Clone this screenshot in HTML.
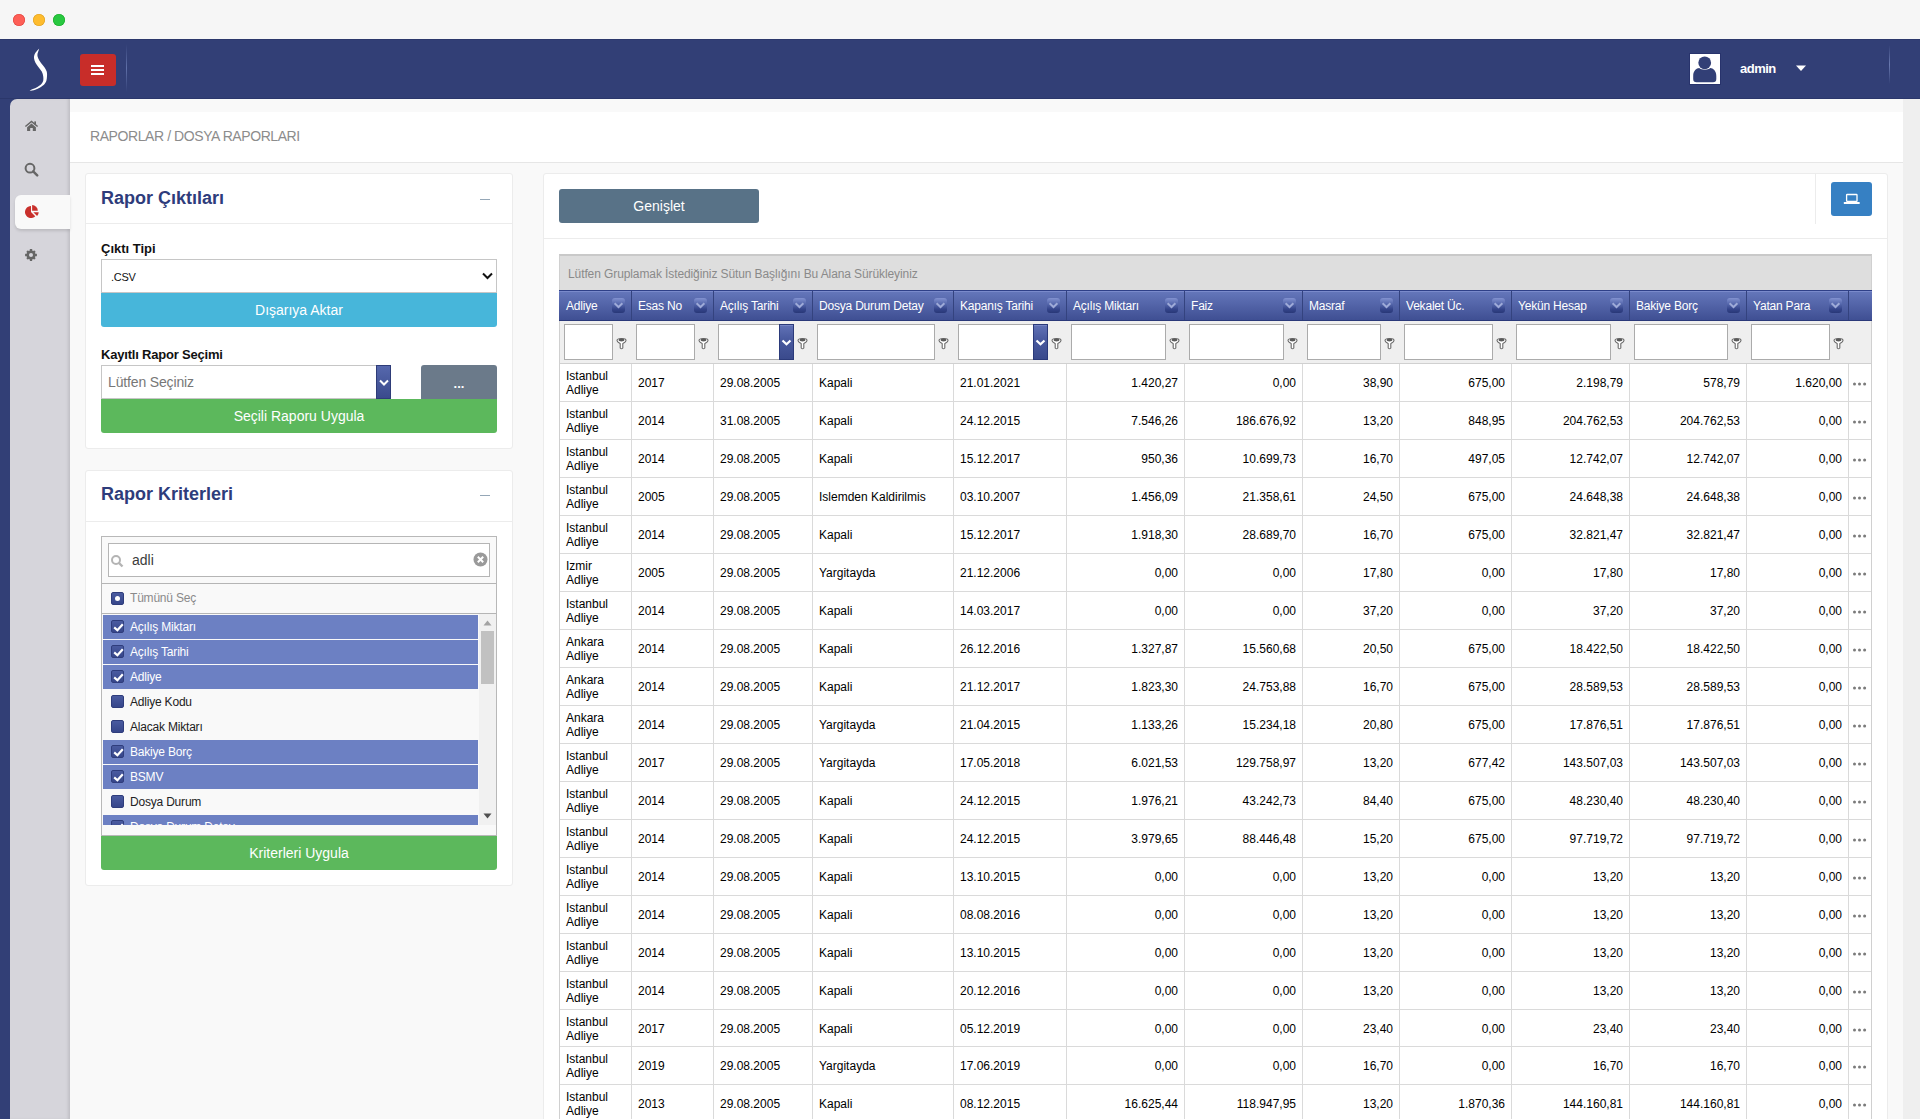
<!DOCTYPE html><html><head><meta charset="utf-8"><style>
*{box-sizing:border-box;margin:0;padding:0}
html,body{width:1920px;height:1119px;overflow:hidden}
body{position:relative;background:#f9f9f9;font-family:"Liberation Sans",sans-serif;color:#222}
.a{position:absolute}
#titlebar{left:0;top:0;width:1920px;height:39px;background:#f6f6f6}
.tl{position:absolute;top:14px;width:12px;height:12px;border-radius:50%}
#nav{left:0;top:39px;width:1920px;height:60px;background:#323f76;box-shadow:inset 0 1px #2b376b,inset 0 -1px #2b376b}
#side{left:10px;top:99px;width:60px;height:1020px;background:#d6d5db;border-top-left-radius:7px;box-shadow:inset -3px 0 3px -1px rgba(0,0,0,0.10)}
#rstrip{left:1903px;top:99px;width:17px;height:1020px;background:#efefef}
#topstrip{left:70px;top:99px;width:1833px;height:13px;background:#f9f9f9}
#bc{left:70px;top:112px;width:1833px;height:51px;background:#fff;border-bottom:1px solid #e6e6e6}
#bc span{position:absolute;left:20px;top:16px;font-size:14px;color:#8c8c8c;letter-spacing:-0.42px}
.panel{position:absolute;background:#fff;border:1px solid #ececec;border-radius:3px}
.ptitle{position:absolute;left:15px;font-size:18px;font-weight:bold;color:#2e3c7b}
.pmin{position:absolute;width:10px;height:1px;background:#95a7b7}
.phdr{position:absolute;left:0;width:100%;height:1px;background:#ececec}
.lbl{position:absolute;font-size:13px;font-weight:bold;color:#111}
.btn{position:absolute;color:#fff;text-align:center;font-size:14px}
</style></head><body>
<div class="a" id="titlebar"><div class="tl" style="left:13px;background:#fe5f57;box-shadow:inset 0 0 0 0.6px #e0443e"></div><div class="tl" style="left:33px;background:#febc2e;box-shadow:inset 0 0 0 0.6px #dea123"></div><div class="tl" style="left:53px;background:#28c840;box-shadow:inset 0 0 0 0.6px #1aab29"></div></div>
<div class="a" id="nav">
<svg class="a" style="left:0;top:0" width="140" height="60" viewBox="0 39 140 60"><path d="M38.75 49.00 C38.18 49.57 36.34 51.55 35.60 52.60 C34.86 53.65 34.56 54.33 34.30 55.30 C34.04 56.27 33.84 57.13 34.06 58.40 C34.28 59.67 34.82 61.40 35.60 62.90 C36.38 64.40 37.70 65.92 38.75 67.40 C39.80 68.88 41.16 70.32 41.90 71.80 C42.64 73.28 42.98 74.80 43.20 76.30 C43.42 77.80 43.50 79.53 43.20 80.80 C42.90 82.07 42.52 82.78 41.40 83.90 C40.28 85.02 38.20 86.53 36.50 87.50 C34.80 88.47 32.28 89.15 31.20 89.70 C30.12 90.25 29.33 90.80 30.00 90.80 C30.67 90.80 33.52 90.25 35.20 89.70 C36.88 89.15 38.53 88.47 40.10 87.50 C41.67 86.53 43.55 85.02 44.60 83.90 C45.65 82.78 46.00 82.07 46.40 80.80 C46.80 79.53 46.93 77.80 47.00 76.30 C47.07 74.80 47.20 73.28 46.80 71.80 C46.40 70.32 45.57 68.88 44.60 67.40 C43.63 65.92 42.05 64.40 41.00 62.90 C39.95 61.40 38.90 59.67 38.30 58.40 C37.70 57.13 37.47 56.27 37.40 55.30 C37.33 54.33 37.63 53.62 37.90 52.60 C38.17 51.58 38.86 49.80 39.00 49.20 C39.14 48.60 39.32 48.43 38.75 49.00Z" fill="#fff"/></svg>
<div class="a" style="left:80px;top:15px;width:36px;height:32px;background:#c82d29;border-radius:3px"></div>
<div class="a" style="left:91px;top:26px;width:13px;height:2px;background:#fff"></div>
<div class="a" style="left:91px;top:30px;width:13px;height:2px;background:#fff"></div>
<div class="a" style="left:91px;top:34px;width:13px;height:2px;background:#fff"></div>
<div class="a" style="left:126px;top:5px;width:1px;height:48px;background:linear-gradient(rgba(98,114,168,0),#6070a8 50%,rgba(98,114,168,0))"></div>
<div class="a" style="left:1690px;top:15px;width:30px;height:30px;background:#fff;box-shadow:0 0 0 1px #28336c"><svg width="30" height="30"><circle cx="14.7" cy="8.8" r="6.4" fill="#323f76"/><path d="M3.2 25 L3.2 22 C3.2 16.5 6.5 14.3 9.2 14 C11.5 16.3 18 16.3 20.3 14 C23 14.3 26.3 16.5 26.3 22 L26.3 25 Q26.3 28.3 23 28.3 L6.5 28.3 Q3.2 28.3 3.2 25Z" fill="#323f76"/></svg></div>
<div class="a" style="left:1740px;top:22px;font-size:13px;font-weight:bold;letter-spacing:-0.5px;color:#fff">admin</div>
<svg class="a" style="left:1795px;top:25.7px" width="12" height="7"><path d="M1 0.5 L11 0.5 L6 6 Z" fill="#fff"/></svg>
<div class="a" style="left:1889px;top:6px;width:1px;height:39px;background:linear-gradient(rgba(98,114,168,0),#6a7ab0 50%,rgba(98,114,168,0))"></div>
</div>
<div class="a" style="left:0;top:99px;width:10px;height:1020px;background:#323f76"></div><div class="a" style="left:0;top:99px;width:20px;height:20px;background:#323f76"></div>
<div class="a" id="side"></div>
<div class="a" id="rstrip"></div>
<div class="a" id="topstrip"></div>
<svg class="a" style="left:24px;top:119px" width="16" height="14" viewBox="24 119 16 14"><path d="M25.4 126.5 L31.5 121.4 L37.6 126.5" fill="none" stroke="#666" stroke-width="1.5"/><rect x="34.3" y="121.4" width="1.7" height="3" fill="#666"/><path d="M27.1 127.2 L31.5 123.5 L35.9 127.2 L35.9 130.9 L32.8 130.9 L32.8 128 L30.2 128 L30.2 130.9 L27.1 130.9 Z" fill="#666"/></svg>
<svg class="a" style="left:24px;top:162px" width="15" height="15" viewBox="0 0 15 15"><circle cx="6" cy="6.2" r="4.4" fill="none" stroke="#666" stroke-width="2"/><path d="M9.2 9.4 L13.2 13.4" stroke="#666" stroke-width="2.4" stroke-linecap="round"/></svg>
<div class="a" style="left:15px;top:195px;width:55px;height:34px;background:#f9f9f9;border-radius:6px 0 0 6px;box-shadow:0 2px 3px rgba(0,0,0,0.12)"></div>
<svg class="a" style="left:24px;top:203px" width="16" height="16" viewBox="24 203 16 16"><path d="M31 212 L31 206 A6 6 0 1 0 35.24 216.24 Z" fill="#c9302c"/><path d="M32.1 210.8 L32.1 205.1 A5.7 5.7 0 0 1 37.8 210.8 Z" fill="#c9302c"/><path d="M33.3 212.3 L38.7 212.3 A5.4 5.4 0 0 1 37.1 216.1 Z" fill="#c9302c"/></svg>
<svg class="a" style="left:24px;top:248px" width="14" height="14" viewBox="0 0 14 14"><g fill="#666"><circle cx="7" cy="7" r="4.5"/><rect x="5.8" y="1.1" width="2.4" height="11.8" rx="0.3"/><rect x="1.1" y="5.8" width="11.8" height="2.4" rx="0.3"/><rect x="5.8" y="1.4" width="2.4" height="11.2" rx="0.3" transform="rotate(45 7 7)"/><rect x="5.8" y="1.4" width="2.4" height="11.2" rx="0.3" transform="rotate(-45 7 7)"/></g><circle cx="7" cy="7" r="2" fill="#d6d5db"/></svg>
<div class="a" id="bc"><span>RAPORLAR / DOSYA RAPORLARI</span></div>
<div class="panel" style="left:85px;top:173px;width:428px;height:276px">
<div class="ptitle" style="top:14px">Rapor Çıktıları</div>
<div class="pmin" style="left:394px;top:25px"></div>
<div class="phdr" style="top:49px"></div>
</div>
<div class="lbl" style="left:101px;top:241px">Çıktı Tipi</div>
<div class="a" style="left:101px;top:259px;width:396px;height:34px;background:#fff;border:1px solid #c6c6c6"><span class="a" style="left:9px;top:11px;font-size:11px;letter-spacing:-0.3px;color:#111">.CSV</span><svg class="a" style="left:380px;top:12px" width="11" height="8"><path d="M1 1.5 L5.5 6 L10 1.5" fill="none" stroke="#111" stroke-width="2"/></svg></div>
<div class="btn" style="left:101px;top:293px;width:396px;height:34px;background:#47b6da;border-radius:0 0 3px 3px;line-height:34px">Dışarıya Aktar</div>
<div class="lbl" style="left:101px;top:347px;letter-spacing:-0.2px">Kayıtlı Rapor Seçimi</div>
<div class="a" style="left:101px;top:365px;width:290px;height:34px;background:#fff;border:1px solid #c6c6c6"><span class="a" style="left:6px;top:8px;font-size:14px;letter-spacing:-0.15px;color:#777">Lütfen Seçiniz</span></div>
<div class="a" style="left:376px;top:365px;width:15px;height:34px;background:linear-gradient(#5668ad,#3a4a8c);border:1px solid #2e3c78"><svg class="a" style="left:2px;top:13px" width="10" height="8"><path d="M1 1.5 L5 5.5 L9 1.5" fill="none" stroke="#fff" stroke-width="2"/></svg></div>
<div class="btn" style="left:421px;top:365px;width:76px;height:34px;background:#6b7a8a;border-radius:3px 3px 0 0;line-height:38px;font-weight:bold;font-size:13px">...</div>
<div class="btn" style="left:101px;top:399px;width:396px;height:34px;background:#5cb85c;border-radius:0 0 3px 3px;line-height:34px">Seçili Raporu Uygula</div>
<div class="panel" style="left:85px;top:470px;width:428px;height:416px">
<div class="ptitle" style="top:13px">Rapor Kriterleri</div>
<div class="pmin" style="left:394px;top:24px"></div>
<div class="phdr" style="top:50px"></div>
</div>
<div class="a" style="left:101px;top:536px;width:396px;height:300px;background:#f9f9f9;border:1px solid #b8b8b8"></div>
<div class="a" style="left:108px;top:543px;width:382px;height:34px;background:#fff;border:1px solid #b5b5b5"></div>
<svg class="a" style="left:110px;top:554px" width="15" height="15" viewBox="0 0 15 15"><circle cx="6" cy="6" r="4" fill="none" stroke="#b4b4b4" stroke-width="2"/><path d="M9 9 L12.5 12.5" stroke="#b4b4b4" stroke-width="2.4" stroke-linecap="butt"/></svg>
<div class="a" style="left:132px;top:552px;font-size:14px;color:#3c3c3c">adli</div>
<svg class="a" style="left:473px;top:552px" width="15" height="15" viewBox="0 0 15 15"><circle cx="7.5" cy="7.5" r="7" fill="#9a9a9a"/><path d="M4.8 4.8 L10.2 10.2 M10.2 4.8 L4.8 10.2" stroke="#fff" stroke-width="2"/></svg>
<div class="a" style="left:102px;top:583px;width:394px;height:1px;background:#b5b5b5"></div>
<div class="a" style="left:102px;top:613px;width:394px;height:1px;background:#b5b5b5"></div>
<div class="a" style="left:111px;top:592px;width:13px;height:13px;background:linear-gradient(#4a5ba0,#36468a);border:1px solid #2f3d7c;border-radius:2px"><div class="a" style="left:3px;top:3px;width:5px;height:5px;border-radius:50%;background:#fff"></div></div>
<div class="a" style="left:130px;top:591px;font-size:12px;letter-spacing:-0.2px;color:#8a8a8a">Tümünü Seç</div>
<div class="a" style="left:102px;top:614px;width:377px;height:211px;overflow:hidden">
<div class="a" style="left:1px;top:1px;width:375px;height:24px;background:#6c80c3"></div>
<div class="a" style="left:9px;top:6px;width:13px;height:13px;background:linear-gradient(#4a5ba0,#36468a);border:1px solid #2f3d7c;border-radius:2px"><svg class="a" style="left:1px;top:1px" width="11" height="11"><path d="M1.2 5.4 L4.4 8.3 L9.8 2.2" fill="none" stroke="#fff" stroke-width="2.2"/></svg></div>
<div class="a" style="left:28px;top:6px;font-size:12px;letter-spacing:-0.2px;color:#fff">Açılış Miktarı</div>
<div class="a" style="left:1px;top:26px;width:375px;height:24px;background:#6c80c3"></div>
<div class="a" style="left:9px;top:31px;width:13px;height:13px;background:linear-gradient(#4a5ba0,#36468a);border:1px solid #2f3d7c;border-radius:2px"><svg class="a" style="left:1px;top:1px" width="11" height="11"><path d="M1.2 5.4 L4.4 8.3 L9.8 2.2" fill="none" stroke="#fff" stroke-width="2.2"/></svg></div>
<div class="a" style="left:28px;top:31px;font-size:12px;letter-spacing:-0.2px;color:#fff">Açılış Tarihi</div>
<div class="a" style="left:1px;top:51px;width:375px;height:24px;background:#6c80c3"></div>
<div class="a" style="left:9px;top:56px;width:13px;height:13px;background:linear-gradient(#4a5ba0,#36468a);border:1px solid #2f3d7c;border-radius:2px"><svg class="a" style="left:1px;top:1px" width="11" height="11"><path d="M1.2 5.4 L4.4 8.3 L9.8 2.2" fill="none" stroke="#fff" stroke-width="2.2"/></svg></div>
<div class="a" style="left:28px;top:56px;font-size:12px;letter-spacing:-0.2px;color:#fff">Adliye</div>
<div class="a" style="left:1px;top:76px;width:375px;height:24px;background:#f9f9f9"></div>
<div class="a" style="left:9px;top:81px;width:13px;height:13px;background:linear-gradient(#4a5ba0,#36468a);border:1px solid #2f3d7c;border-radius:2px"></div>
<div class="a" style="left:28px;top:81px;font-size:12px;letter-spacing:-0.2px;color:#222">Adliye Kodu</div>
<div class="a" style="left:1px;top:101px;width:375px;height:24px;background:#f9f9f9"></div>
<div class="a" style="left:9px;top:106px;width:13px;height:13px;background:linear-gradient(#4a5ba0,#36468a);border:1px solid #2f3d7c;border-radius:2px"></div>
<div class="a" style="left:28px;top:106px;font-size:12px;letter-spacing:-0.2px;color:#222">Alacak Miktarı</div>
<div class="a" style="left:1px;top:126px;width:375px;height:24px;background:#6c80c3"></div>
<div class="a" style="left:9px;top:131px;width:13px;height:13px;background:linear-gradient(#4a5ba0,#36468a);border:1px solid #2f3d7c;border-radius:2px"><svg class="a" style="left:1px;top:1px" width="11" height="11"><path d="M1.2 5.4 L4.4 8.3 L9.8 2.2" fill="none" stroke="#fff" stroke-width="2.2"/></svg></div>
<div class="a" style="left:28px;top:131px;font-size:12px;letter-spacing:-0.2px;color:#fff">Bakiye Borç</div>
<div class="a" style="left:1px;top:151px;width:375px;height:24px;background:#6c80c3"></div>
<div class="a" style="left:9px;top:156px;width:13px;height:13px;background:linear-gradient(#4a5ba0,#36468a);border:1px solid #2f3d7c;border-radius:2px"><svg class="a" style="left:1px;top:1px" width="11" height="11"><path d="M1.2 5.4 L4.4 8.3 L9.8 2.2" fill="none" stroke="#fff" stroke-width="2.2"/></svg></div>
<div class="a" style="left:28px;top:156px;font-size:12px;letter-spacing:-0.2px;color:#fff">BSMV</div>
<div class="a" style="left:1px;top:176px;width:375px;height:24px;background:#f9f9f9"></div>
<div class="a" style="left:9px;top:181px;width:13px;height:13px;background:linear-gradient(#4a5ba0,#36468a);border:1px solid #2f3d7c;border-radius:2px"></div>
<div class="a" style="left:28px;top:181px;font-size:12px;letter-spacing:-0.2px;color:#222">Dosya Durum</div>
<div class="a" style="left:1px;top:201px;width:375px;height:24px;background:#6c80c3"></div>
<div class="a" style="left:9px;top:206px;width:13px;height:13px;background:linear-gradient(#4a5ba0,#36468a);border:1px solid #2f3d7c;border-radius:2px"><svg class="a" style="left:1px;top:1px" width="11" height="11"><path d="M1.2 5.4 L4.4 8.3 L9.8 2.2" fill="none" stroke="#fff" stroke-width="2.2"/></svg></div>
<div class="a" style="left:28px;top:206px;font-size:12px;letter-spacing:-0.2px;color:#fff">Dosya Durum Detay</div>
</div>
<div class="a" style="left:479px;top:614px;width:17px;height:211px;background:#f1f1f1"></div>
<svg class="a" style="left:483px;top:620px" width="9" height="6"><path d="M0.5 5.5 L4.5 0.5 L8.5 5.5Z" fill="#a3a3a3"/></svg>
<div class="a" style="left:481px;top:631px;width:13px;height:53px;background:#c1c1c1"></div>
<svg class="a" style="left:483px;top:813px" width="9" height="6"><path d="M0.5 0.5 L4.5 5.5 L8.5 0.5Z" fill="#505050"/></svg>
<div class="btn" style="left:101px;top:836px;width:396px;height:34px;background:#5cb85c;border-radius:0 0 3px 3px;line-height:34px">Kriterleri Uygula</div>
<div class="panel" style="left:543px;top:173px;width:1345px;height:980px"></div>
<div class="a" style="left:544px;top:238px;width:1343px;height:1px;background:#ececec"></div>
<div class="a" style="left:1815px;top:174px;width:1px;height:50px;background:#ececec"></div>
<div class="btn" style="left:559px;top:189px;width:200px;height:34px;background:#587287;border-radius:3px;line-height:34px">Genişlet</div>
<div class="a" style="left:1831px;top:182px;width:41px;height:34px;background:#3680c3;border-radius:3px"><svg class="a" style="left:0;top:0" width="41" height="34" viewBox="1831 182 41 34"><rect x="1846.6" y="194.5" width="10.4" height="6.8" rx="0.6" fill="none" stroke="#fff" stroke-width="1.3"/><rect x="1843.8" y="202" width="15.9" height="2" rx="0.5" fill="#fff"/></svg></div>
<div class="a" style="left:559px;top:254px;width:1313px;height:36px;background:#dedede;border-top:2px solid #c9c9c9;border-left:1px solid #d0d0d0;border-right:1px solid #d0d0d0"><span class="a" style="left:8px;top:11px;font-size:12px;letter-spacing:-0.1px;color:#8a8a8a">Lütfen Gruplamak İstediğiniz Sütun Başlığını Bu Alana Sürükleyiniz</span></div>
<div class="a" style="left:559px;top:290px;width:1313px;height:31px;background:linear-gradient(#6577bb,#3f4f93);border-top:1px solid #2f4088;border-bottom:1px solid #2a3979"></div><div class="a" style="left:559px;top:291px;width:1313px;height:1px;background:#7a8acb"></div>
<div class="a" style="left:566px;top:299px;font-size:12px;letter-spacing:-0.2px;color:#fff">Adliye</div>
<div class="a" style="left:612px;top:298px;width:13px;height:15px;border-radius:3px;background:linear-gradient(#8292d0,#5567ac 40%,#34448a 75%,#293878)"><svg class="a" style="left:1px;top:3px" width="11" height="8"><path d="M1.6 2.3 L5.5 6 L9.4 2.3" fill="none" stroke="#9eaad8" stroke-width="2"/></svg></div>
<div class="a" style="left:631px;top:291px;width:1px;height:29px;background:#34437f"></div>
<div class="a" style="left:638px;top:299px;font-size:12px;letter-spacing:-0.2px;color:#fff">Esas No</div>
<div class="a" style="left:694px;top:298px;width:13px;height:15px;border-radius:3px;background:linear-gradient(#8292d0,#5567ac 40%,#34448a 75%,#293878)"><svg class="a" style="left:1px;top:3px" width="11" height="8"><path d="M1.6 2.3 L5.5 6 L9.4 2.3" fill="none" stroke="#9eaad8" stroke-width="2"/></svg></div>
<div class="a" style="left:713px;top:291px;width:1px;height:29px;background:#34437f"></div>
<div class="a" style="left:720px;top:299px;font-size:12px;letter-spacing:-0.2px;color:#fff">Açılış Tarihi</div>
<div class="a" style="left:793px;top:298px;width:13px;height:15px;border-radius:3px;background:linear-gradient(#8292d0,#5567ac 40%,#34448a 75%,#293878)"><svg class="a" style="left:1px;top:3px" width="11" height="8"><path d="M1.6 2.3 L5.5 6 L9.4 2.3" fill="none" stroke="#9eaad8" stroke-width="2"/></svg></div>
<div class="a" style="left:812px;top:291px;width:1px;height:29px;background:#34437f"></div>
<div class="a" style="left:819px;top:299px;font-size:12px;letter-spacing:-0.2px;color:#fff">Dosya Durum Detay</div>
<div class="a" style="left:934px;top:298px;width:13px;height:15px;border-radius:3px;background:linear-gradient(#8292d0,#5567ac 40%,#34448a 75%,#293878)"><svg class="a" style="left:1px;top:3px" width="11" height="8"><path d="M1.6 2.3 L5.5 6 L9.4 2.3" fill="none" stroke="#9eaad8" stroke-width="2"/></svg></div>
<div class="a" style="left:953px;top:291px;width:1px;height:29px;background:#34437f"></div>
<div class="a" style="left:960px;top:299px;font-size:12px;letter-spacing:-0.2px;color:#fff">Kapanış Tarihi</div>
<div class="a" style="left:1047px;top:298px;width:13px;height:15px;border-radius:3px;background:linear-gradient(#8292d0,#5567ac 40%,#34448a 75%,#293878)"><svg class="a" style="left:1px;top:3px" width="11" height="8"><path d="M1.6 2.3 L5.5 6 L9.4 2.3" fill="none" stroke="#9eaad8" stroke-width="2"/></svg></div>
<div class="a" style="left:1066px;top:291px;width:1px;height:29px;background:#34437f"></div>
<div class="a" style="left:1073px;top:299px;font-size:12px;letter-spacing:-0.2px;color:#fff">Açılış Miktarı</div>
<div class="a" style="left:1165px;top:298px;width:13px;height:15px;border-radius:3px;background:linear-gradient(#8292d0,#5567ac 40%,#34448a 75%,#293878)"><svg class="a" style="left:1px;top:3px" width="11" height="8"><path d="M1.6 2.3 L5.5 6 L9.4 2.3" fill="none" stroke="#9eaad8" stroke-width="2"/></svg></div>
<div class="a" style="left:1184px;top:291px;width:1px;height:29px;background:#34437f"></div>
<div class="a" style="left:1191px;top:299px;font-size:12px;letter-spacing:-0.2px;color:#fff">Faiz</div>
<div class="a" style="left:1283px;top:298px;width:13px;height:15px;border-radius:3px;background:linear-gradient(#8292d0,#5567ac 40%,#34448a 75%,#293878)"><svg class="a" style="left:1px;top:3px" width="11" height="8"><path d="M1.6 2.3 L5.5 6 L9.4 2.3" fill="none" stroke="#9eaad8" stroke-width="2"/></svg></div>
<div class="a" style="left:1302px;top:291px;width:1px;height:29px;background:#34437f"></div>
<div class="a" style="left:1309px;top:299px;font-size:12px;letter-spacing:-0.2px;color:#fff">Masraf</div>
<div class="a" style="left:1380px;top:298px;width:13px;height:15px;border-radius:3px;background:linear-gradient(#8292d0,#5567ac 40%,#34448a 75%,#293878)"><svg class="a" style="left:1px;top:3px" width="11" height="8"><path d="M1.6 2.3 L5.5 6 L9.4 2.3" fill="none" stroke="#9eaad8" stroke-width="2"/></svg></div>
<div class="a" style="left:1399px;top:291px;width:1px;height:29px;background:#34437f"></div>
<div class="a" style="left:1406px;top:299px;font-size:12px;letter-spacing:-0.2px;color:#fff">Vekalet Üc.</div>
<div class="a" style="left:1492px;top:298px;width:13px;height:15px;border-radius:3px;background:linear-gradient(#8292d0,#5567ac 40%,#34448a 75%,#293878)"><svg class="a" style="left:1px;top:3px" width="11" height="8"><path d="M1.6 2.3 L5.5 6 L9.4 2.3" fill="none" stroke="#9eaad8" stroke-width="2"/></svg></div>
<div class="a" style="left:1511px;top:291px;width:1px;height:29px;background:#34437f"></div>
<div class="a" style="left:1518px;top:299px;font-size:12px;letter-spacing:-0.2px;color:#fff">Yekün Hesap</div>
<div class="a" style="left:1610px;top:298px;width:13px;height:15px;border-radius:3px;background:linear-gradient(#8292d0,#5567ac 40%,#34448a 75%,#293878)"><svg class="a" style="left:1px;top:3px" width="11" height="8"><path d="M1.6 2.3 L5.5 6 L9.4 2.3" fill="none" stroke="#9eaad8" stroke-width="2"/></svg></div>
<div class="a" style="left:1629px;top:291px;width:1px;height:29px;background:#34437f"></div>
<div class="a" style="left:1636px;top:299px;font-size:12px;letter-spacing:-0.2px;color:#fff">Bakiye Borç</div>
<div class="a" style="left:1727px;top:298px;width:13px;height:15px;border-radius:3px;background:linear-gradient(#8292d0,#5567ac 40%,#34448a 75%,#293878)"><svg class="a" style="left:1px;top:3px" width="11" height="8"><path d="M1.6 2.3 L5.5 6 L9.4 2.3" fill="none" stroke="#9eaad8" stroke-width="2"/></svg></div>
<div class="a" style="left:1746px;top:291px;width:1px;height:29px;background:#34437f"></div>
<div class="a" style="left:1753px;top:299px;font-size:12px;letter-spacing:-0.2px;color:#fff">Yatan Para</div>
<div class="a" style="left:1829px;top:298px;width:13px;height:15px;border-radius:3px;background:linear-gradient(#8292d0,#5567ac 40%,#34448a 75%,#293878)"><svg class="a" style="left:1px;top:3px" width="11" height="8"><path d="M1.6 2.3 L5.5 6 L9.4 2.3" fill="none" stroke="#9eaad8" stroke-width="2"/></svg></div>
<div class="a" style="left:1848px;top:291px;width:1px;height:29px;background:#34437f"></div>
<div class="a" style="left:559px;top:321px;width:1313px;height:43px;background:#efefef;border-left:1px solid #d0d0d0;border-right:1px solid #d0d0d0;border-bottom:1px solid #d0d0d0"></div>
<div class="a" style="left:564px;top:324px;width:49px;height:36px;background:#fff;border:1px solid #ababab"></div>
<svg class="a" style="left:616px;top:337px" width="11" height="13" viewBox="0 0 11 13"><path d="M1 3.4 C1 0.9 10 0.9 10 3.4 C10 4.9 7.6 5.9 6.8 6.6 L6.8 11 Q5.5 12.4 4.2 11 L4.2 6.6 C3.4 5.9 1 4.9 1 3.4 Z" fill="#fff" stroke="#6a6a6a" stroke-width="1.1"/><ellipse cx="5.5" cy="3" rx="3" ry="1.4" fill="#5a5a5a"/></svg>
<div class="a" style="left:636px;top:324px;width:59px;height:36px;background:#fff;border:1px solid #ababab"></div>
<svg class="a" style="left:698px;top:337px" width="11" height="13" viewBox="0 0 11 13"><path d="M1 3.4 C1 0.9 10 0.9 10 3.4 C10 4.9 7.6 5.9 6.8 6.6 L6.8 11 Q5.5 12.4 4.2 11 L4.2 6.6 C3.4 5.9 1 4.9 1 3.4 Z" fill="#fff" stroke="#6a6a6a" stroke-width="1.1"/><ellipse cx="5.5" cy="3" rx="3" ry="1.4" fill="#5a5a5a"/></svg>
<div class="a" style="left:718px;top:324px;width:76px;height:36px;background:#fff;border:1px solid #ababab"></div>
<div class="a" style="left:779px;top:324px;width:15px;height:36px;background:linear-gradient(#6172b6,#4a5ba0 40%,#3a4a8c);border:1px solid #2b3a7a;box-shadow:inset 0 1px #7585c4"><svg class="a" style="left:1px;top:14px" width="11" height="8"><path d="M1.5 1.5 L5.5 5.3 L9.5 1.5" fill="none" stroke="#fff" stroke-width="2.2"/></svg></div>
<svg class="a" style="left:797px;top:337px" width="11" height="13" viewBox="0 0 11 13"><path d="M1 3.4 C1 0.9 10 0.9 10 3.4 C10 4.9 7.6 5.9 6.8 6.6 L6.8 11 Q5.5 12.4 4.2 11 L4.2 6.6 C3.4 5.9 1 4.9 1 3.4 Z" fill="#fff" stroke="#6a6a6a" stroke-width="1.1"/><ellipse cx="5.5" cy="3" rx="3" ry="1.4" fill="#5a5a5a"/></svg>
<div class="a" style="left:817px;top:324px;width:118px;height:36px;background:#fff;border:1px solid #ababab"></div>
<svg class="a" style="left:938px;top:337px" width="11" height="13" viewBox="0 0 11 13"><path d="M1 3.4 C1 0.9 10 0.9 10 3.4 C10 4.9 7.6 5.9 6.8 6.6 L6.8 11 Q5.5 12.4 4.2 11 L4.2 6.6 C3.4 5.9 1 4.9 1 3.4 Z" fill="#fff" stroke="#6a6a6a" stroke-width="1.1"/><ellipse cx="5.5" cy="3" rx="3" ry="1.4" fill="#5a5a5a"/></svg>
<div class="a" style="left:958px;top:324px;width:90px;height:36px;background:#fff;border:1px solid #ababab"></div>
<div class="a" style="left:1033px;top:324px;width:15px;height:36px;background:linear-gradient(#6172b6,#4a5ba0 40%,#3a4a8c);border:1px solid #2b3a7a;box-shadow:inset 0 1px #7585c4"><svg class="a" style="left:1px;top:14px" width="11" height="8"><path d="M1.5 1.5 L5.5 5.3 L9.5 1.5" fill="none" stroke="#fff" stroke-width="2.2"/></svg></div>
<svg class="a" style="left:1051px;top:337px" width="11" height="13" viewBox="0 0 11 13"><path d="M1 3.4 C1 0.9 10 0.9 10 3.4 C10 4.9 7.6 5.9 6.8 6.6 L6.8 11 Q5.5 12.4 4.2 11 L4.2 6.6 C3.4 5.9 1 4.9 1 3.4 Z" fill="#fff" stroke="#6a6a6a" stroke-width="1.1"/><ellipse cx="5.5" cy="3" rx="3" ry="1.4" fill="#5a5a5a"/></svg>
<div class="a" style="left:1071px;top:324px;width:95px;height:36px;background:#fff;border:1px solid #ababab"></div>
<svg class="a" style="left:1169px;top:337px" width="11" height="13" viewBox="0 0 11 13"><path d="M1 3.4 C1 0.9 10 0.9 10 3.4 C10 4.9 7.6 5.9 6.8 6.6 L6.8 11 Q5.5 12.4 4.2 11 L4.2 6.6 C3.4 5.9 1 4.9 1 3.4 Z" fill="#fff" stroke="#6a6a6a" stroke-width="1.1"/><ellipse cx="5.5" cy="3" rx="3" ry="1.4" fill="#5a5a5a"/></svg>
<div class="a" style="left:1189px;top:324px;width:95px;height:36px;background:#fff;border:1px solid #ababab"></div>
<svg class="a" style="left:1287px;top:337px" width="11" height="13" viewBox="0 0 11 13"><path d="M1 3.4 C1 0.9 10 0.9 10 3.4 C10 4.9 7.6 5.9 6.8 6.6 L6.8 11 Q5.5 12.4 4.2 11 L4.2 6.6 C3.4 5.9 1 4.9 1 3.4 Z" fill="#fff" stroke="#6a6a6a" stroke-width="1.1"/><ellipse cx="5.5" cy="3" rx="3" ry="1.4" fill="#5a5a5a"/></svg>
<div class="a" style="left:1307px;top:324px;width:74px;height:36px;background:#fff;border:1px solid #ababab"></div>
<svg class="a" style="left:1384px;top:337px" width="11" height="13" viewBox="0 0 11 13"><path d="M1 3.4 C1 0.9 10 0.9 10 3.4 C10 4.9 7.6 5.9 6.8 6.6 L6.8 11 Q5.5 12.4 4.2 11 L4.2 6.6 C3.4 5.9 1 4.9 1 3.4 Z" fill="#fff" stroke="#6a6a6a" stroke-width="1.1"/><ellipse cx="5.5" cy="3" rx="3" ry="1.4" fill="#5a5a5a"/></svg>
<div class="a" style="left:1404px;top:324px;width:89px;height:36px;background:#fff;border:1px solid #ababab"></div>
<svg class="a" style="left:1496px;top:337px" width="11" height="13" viewBox="0 0 11 13"><path d="M1 3.4 C1 0.9 10 0.9 10 3.4 C10 4.9 7.6 5.9 6.8 6.6 L6.8 11 Q5.5 12.4 4.2 11 L4.2 6.6 C3.4 5.9 1 4.9 1 3.4 Z" fill="#fff" stroke="#6a6a6a" stroke-width="1.1"/><ellipse cx="5.5" cy="3" rx="3" ry="1.4" fill="#5a5a5a"/></svg>
<div class="a" style="left:1516px;top:324px;width:95px;height:36px;background:#fff;border:1px solid #ababab"></div>
<svg class="a" style="left:1614px;top:337px" width="11" height="13" viewBox="0 0 11 13"><path d="M1 3.4 C1 0.9 10 0.9 10 3.4 C10 4.9 7.6 5.9 6.8 6.6 L6.8 11 Q5.5 12.4 4.2 11 L4.2 6.6 C3.4 5.9 1 4.9 1 3.4 Z" fill="#fff" stroke="#6a6a6a" stroke-width="1.1"/><ellipse cx="5.5" cy="3" rx="3" ry="1.4" fill="#5a5a5a"/></svg>
<div class="a" style="left:1634px;top:324px;width:94px;height:36px;background:#fff;border:1px solid #ababab"></div>
<svg class="a" style="left:1731px;top:337px" width="11" height="13" viewBox="0 0 11 13"><path d="M1 3.4 C1 0.9 10 0.9 10 3.4 C10 4.9 7.6 5.9 6.8 6.6 L6.8 11 Q5.5 12.4 4.2 11 L4.2 6.6 C3.4 5.9 1 4.9 1 3.4 Z" fill="#fff" stroke="#6a6a6a" stroke-width="1.1"/><ellipse cx="5.5" cy="3" rx="3" ry="1.4" fill="#5a5a5a"/></svg>
<div class="a" style="left:1751px;top:324px;width:79px;height:36px;background:#fff;border:1px solid #ababab"></div>
<svg class="a" style="left:1833px;top:337px" width="11" height="13" viewBox="0 0 11 13"><path d="M1 3.4 C1 0.9 10 0.9 10 3.4 C10 4.9 7.6 5.9 6.8 6.6 L6.8 11 Q5.5 12.4 4.2 11 L4.2 6.6 C3.4 5.9 1 4.9 1 3.4 Z" fill="#fff" stroke="#6a6a6a" stroke-width="1.1"/><ellipse cx="5.5" cy="3" rx="3" ry="1.4" fill="#5a5a5a"/></svg>
<div class="a" style="left:559px;top:364px;width:1313px;height:760px;background:#fff;border-left:1px solid #d0d0d0;border-right:1px solid #d0d0d0"></div>
<div class="a" style="left:631px;top:364px;width:1px;height:760px;background:#dadada"></div>
<div class="a" style="left:713px;top:364px;width:1px;height:760px;background:#dadada"></div>
<div class="a" style="left:812px;top:364px;width:1px;height:760px;background:#dadada"></div>
<div class="a" style="left:953px;top:364px;width:1px;height:760px;background:#dadada"></div>
<div class="a" style="left:1066px;top:364px;width:1px;height:760px;background:#dadada"></div>
<div class="a" style="left:1184px;top:364px;width:1px;height:760px;background:#dadada"></div>
<div class="a" style="left:1302px;top:364px;width:1px;height:760px;background:#dadada"></div>
<div class="a" style="left:1399px;top:364px;width:1px;height:760px;background:#dadada"></div>
<div class="a" style="left:1511px;top:364px;width:1px;height:760px;background:#dadada"></div>
<div class="a" style="left:1629px;top:364px;width:1px;height:760px;background:#dadada"></div>
<div class="a" style="left:1746px;top:364px;width:1px;height:760px;background:#dadada"></div>
<div class="a" style="left:1848px;top:364px;width:1px;height:760px;background:#dadada"></div>
<div class="a" style="left:560px;top:401px;width:1311px;height:1px;background:#dadada"></div>
<div class="a" style="left:566px;top:369.38px;font-size:12px;line-height:14px;color:#000">Istanbul<br>Adliye</div>
<div class="a" style="left:638px;top:376.38px;font-size:12px;line-height:14px;color:#000">2017</div>
<div class="a" style="left:720px;top:376.38px;font-size:12px;line-height:14px;color:#000">29.08.2005</div>
<div class="a" style="left:819px;top:376.38px;font-size:12px;line-height:14px;color:#000">Kapali</div>
<div class="a" style="left:960px;top:376.38px;font-size:12px;line-height:14px;color:#000">21.01.2021</div>
<div class="a" style="right:742px;top:376.38px;font-size:12px;line-height:14px;color:#000">1.420,27</div>
<div class="a" style="right:624px;top:376.38px;font-size:12px;line-height:14px;color:#000">0,00</div>
<div class="a" style="right:527px;top:376.38px;font-size:12px;line-height:14px;color:#000">38,90</div>
<div class="a" style="right:415px;top:376.38px;font-size:12px;line-height:14px;color:#000">675,00</div>
<div class="a" style="right:297px;top:376.38px;font-size:12px;line-height:14px;color:#000">2.198,79</div>
<div class="a" style="right:180px;top:376.38px;font-size:12px;line-height:14px;color:#000">578,79</div>
<div class="a" style="right:78px;top:376.38px;font-size:12px;line-height:14px;color:#000">1.620,00</div>
<svg class="a" style="left:1853px;top:382.38px" width="14" height="4"><circle cx="1.5" cy="2" r="1.5" fill="#7a7a7a"/><circle cx="6.5" cy="2" r="1.5" fill="#7a7a7a"/><circle cx="11.6" cy="2" r="1.5" fill="#7a7a7a"/></svg>
<div class="a" style="left:560px;top:439px;width:1311px;height:1px;background:#dadada"></div>
<div class="a" style="left:566px;top:407.32px;font-size:12px;line-height:14px;color:#000">Istanbul<br>Adliye</div>
<div class="a" style="left:638px;top:414.32px;font-size:12px;line-height:14px;color:#000">2014</div>
<div class="a" style="left:720px;top:414.32px;font-size:12px;line-height:14px;color:#000">31.08.2005</div>
<div class="a" style="left:819px;top:414.32px;font-size:12px;line-height:14px;color:#000">Kapali</div>
<div class="a" style="left:960px;top:414.32px;font-size:12px;line-height:14px;color:#000">24.12.2015</div>
<div class="a" style="right:742px;top:414.32px;font-size:12px;line-height:14px;color:#000">7.546,26</div>
<div class="a" style="right:624px;top:414.32px;font-size:12px;line-height:14px;color:#000">186.676,92</div>
<div class="a" style="right:527px;top:414.32px;font-size:12px;line-height:14px;color:#000">13,20</div>
<div class="a" style="right:415px;top:414.32px;font-size:12px;line-height:14px;color:#000">848,95</div>
<div class="a" style="right:297px;top:414.32px;font-size:12px;line-height:14px;color:#000">204.762,53</div>
<div class="a" style="right:180px;top:414.32px;font-size:12px;line-height:14px;color:#000">204.762,53</div>
<div class="a" style="right:78px;top:414.32px;font-size:12px;line-height:14px;color:#000">0,00</div>
<svg class="a" style="left:1853px;top:420.32px" width="14" height="4"><circle cx="1.5" cy="2" r="1.5" fill="#7a7a7a"/><circle cx="6.5" cy="2" r="1.5" fill="#7a7a7a"/><circle cx="11.6" cy="2" r="1.5" fill="#7a7a7a"/></svg>
<div class="a" style="left:560px;top:477px;width:1311px;height:1px;background:#dadada"></div>
<div class="a" style="left:566px;top:445.27px;font-size:12px;line-height:14px;color:#000">Istanbul<br>Adliye</div>
<div class="a" style="left:638px;top:452.27px;font-size:12px;line-height:14px;color:#000">2014</div>
<div class="a" style="left:720px;top:452.27px;font-size:12px;line-height:14px;color:#000">29.08.2005</div>
<div class="a" style="left:819px;top:452.27px;font-size:12px;line-height:14px;color:#000">Kapali</div>
<div class="a" style="left:960px;top:452.27px;font-size:12px;line-height:14px;color:#000">15.12.2017</div>
<div class="a" style="right:742px;top:452.27px;font-size:12px;line-height:14px;color:#000">950,36</div>
<div class="a" style="right:624px;top:452.27px;font-size:12px;line-height:14px;color:#000">10.699,73</div>
<div class="a" style="right:527px;top:452.27px;font-size:12px;line-height:14px;color:#000">16,70</div>
<div class="a" style="right:415px;top:452.27px;font-size:12px;line-height:14px;color:#000">497,05</div>
<div class="a" style="right:297px;top:452.27px;font-size:12px;line-height:14px;color:#000">12.742,07</div>
<div class="a" style="right:180px;top:452.27px;font-size:12px;line-height:14px;color:#000">12.742,07</div>
<div class="a" style="right:78px;top:452.27px;font-size:12px;line-height:14px;color:#000">0,00</div>
<svg class="a" style="left:1853px;top:458.27px" width="14" height="4"><circle cx="1.5" cy="2" r="1.5" fill="#7a7a7a"/><circle cx="6.5" cy="2" r="1.5" fill="#7a7a7a"/><circle cx="11.6" cy="2" r="1.5" fill="#7a7a7a"/></svg>
<div class="a" style="left:560px;top:515px;width:1311px;height:1px;background:#dadada"></div>
<div class="a" style="left:566px;top:483.23px;font-size:12px;line-height:14px;color:#000">Istanbul<br>Adliye</div>
<div class="a" style="left:638px;top:490.23px;font-size:12px;line-height:14px;color:#000">2005</div>
<div class="a" style="left:720px;top:490.23px;font-size:12px;line-height:14px;color:#000">29.08.2005</div>
<div class="a" style="left:819px;top:490.23px;font-size:12px;line-height:14px;color:#000">Islemden Kaldirilmis</div>
<div class="a" style="left:960px;top:490.23px;font-size:12px;line-height:14px;color:#000">03.10.2007</div>
<div class="a" style="right:742px;top:490.23px;font-size:12px;line-height:14px;color:#000">1.456,09</div>
<div class="a" style="right:624px;top:490.23px;font-size:12px;line-height:14px;color:#000">21.358,61</div>
<div class="a" style="right:527px;top:490.23px;font-size:12px;line-height:14px;color:#000">24,50</div>
<div class="a" style="right:415px;top:490.23px;font-size:12px;line-height:14px;color:#000">675,00</div>
<div class="a" style="right:297px;top:490.23px;font-size:12px;line-height:14px;color:#000">24.648,38</div>
<div class="a" style="right:180px;top:490.23px;font-size:12px;line-height:14px;color:#000">24.648,38</div>
<div class="a" style="right:78px;top:490.23px;font-size:12px;line-height:14px;color:#000">0,00</div>
<svg class="a" style="left:1853px;top:496.23px" width="14" height="4"><circle cx="1.5" cy="2" r="1.5" fill="#7a7a7a"/><circle cx="6.5" cy="2" r="1.5" fill="#7a7a7a"/><circle cx="11.6" cy="2" r="1.5" fill="#7a7a7a"/></svg>
<div class="a" style="left:560px;top:553px;width:1311px;height:1px;background:#dadada"></div>
<div class="a" style="left:566px;top:521.18px;font-size:12px;line-height:14px;color:#000">Istanbul<br>Adliye</div>
<div class="a" style="left:638px;top:528.18px;font-size:12px;line-height:14px;color:#000">2014</div>
<div class="a" style="left:720px;top:528.18px;font-size:12px;line-height:14px;color:#000">29.08.2005</div>
<div class="a" style="left:819px;top:528.18px;font-size:12px;line-height:14px;color:#000">Kapali</div>
<div class="a" style="left:960px;top:528.18px;font-size:12px;line-height:14px;color:#000">15.12.2017</div>
<div class="a" style="right:742px;top:528.18px;font-size:12px;line-height:14px;color:#000">1.918,30</div>
<div class="a" style="right:624px;top:528.18px;font-size:12px;line-height:14px;color:#000">28.689,70</div>
<div class="a" style="right:527px;top:528.18px;font-size:12px;line-height:14px;color:#000">16,70</div>
<div class="a" style="right:415px;top:528.18px;font-size:12px;line-height:14px;color:#000">675,00</div>
<div class="a" style="right:297px;top:528.18px;font-size:12px;line-height:14px;color:#000">32.821,47</div>
<div class="a" style="right:180px;top:528.18px;font-size:12px;line-height:14px;color:#000">32.821,47</div>
<div class="a" style="right:78px;top:528.18px;font-size:12px;line-height:14px;color:#000">0,00</div>
<svg class="a" style="left:1853px;top:534.18px" width="14" height="4"><circle cx="1.5" cy="2" r="1.5" fill="#7a7a7a"/><circle cx="6.5" cy="2" r="1.5" fill="#7a7a7a"/><circle cx="11.6" cy="2" r="1.5" fill="#7a7a7a"/></svg>
<div class="a" style="left:560px;top:591px;width:1311px;height:1px;background:#dadada"></div>
<div class="a" style="left:566px;top:559.12px;font-size:12px;line-height:14px;color:#000">Izmir<br>Adliye</div>
<div class="a" style="left:638px;top:566.12px;font-size:12px;line-height:14px;color:#000">2005</div>
<div class="a" style="left:720px;top:566.12px;font-size:12px;line-height:14px;color:#000">29.08.2005</div>
<div class="a" style="left:819px;top:566.12px;font-size:12px;line-height:14px;color:#000">Yargitayda</div>
<div class="a" style="left:960px;top:566.12px;font-size:12px;line-height:14px;color:#000">21.12.2006</div>
<div class="a" style="right:742px;top:566.12px;font-size:12px;line-height:14px;color:#000">0,00</div>
<div class="a" style="right:624px;top:566.12px;font-size:12px;line-height:14px;color:#000">0,00</div>
<div class="a" style="right:527px;top:566.12px;font-size:12px;line-height:14px;color:#000">17,80</div>
<div class="a" style="right:415px;top:566.12px;font-size:12px;line-height:14px;color:#000">0,00</div>
<div class="a" style="right:297px;top:566.12px;font-size:12px;line-height:14px;color:#000">17,80</div>
<div class="a" style="right:180px;top:566.12px;font-size:12px;line-height:14px;color:#000">17,80</div>
<div class="a" style="right:78px;top:566.12px;font-size:12px;line-height:14px;color:#000">0,00</div>
<svg class="a" style="left:1853px;top:572.12px" width="14" height="4"><circle cx="1.5" cy="2" r="1.5" fill="#7a7a7a"/><circle cx="6.5" cy="2" r="1.5" fill="#7a7a7a"/><circle cx="11.6" cy="2" r="1.5" fill="#7a7a7a"/></svg>
<div class="a" style="left:560px;top:629px;width:1311px;height:1px;background:#dadada"></div>
<div class="a" style="left:566px;top:597.08px;font-size:12px;line-height:14px;color:#000">Istanbul<br>Adliye</div>
<div class="a" style="left:638px;top:604.08px;font-size:12px;line-height:14px;color:#000">2014</div>
<div class="a" style="left:720px;top:604.08px;font-size:12px;line-height:14px;color:#000">29.08.2005</div>
<div class="a" style="left:819px;top:604.08px;font-size:12px;line-height:14px;color:#000">Kapali</div>
<div class="a" style="left:960px;top:604.08px;font-size:12px;line-height:14px;color:#000">14.03.2017</div>
<div class="a" style="right:742px;top:604.08px;font-size:12px;line-height:14px;color:#000">0,00</div>
<div class="a" style="right:624px;top:604.08px;font-size:12px;line-height:14px;color:#000">0,00</div>
<div class="a" style="right:527px;top:604.08px;font-size:12px;line-height:14px;color:#000">37,20</div>
<div class="a" style="right:415px;top:604.08px;font-size:12px;line-height:14px;color:#000">0,00</div>
<div class="a" style="right:297px;top:604.08px;font-size:12px;line-height:14px;color:#000">37,20</div>
<div class="a" style="right:180px;top:604.08px;font-size:12px;line-height:14px;color:#000">37,20</div>
<div class="a" style="right:78px;top:604.08px;font-size:12px;line-height:14px;color:#000">0,00</div>
<svg class="a" style="left:1853px;top:610.08px" width="14" height="4"><circle cx="1.5" cy="2" r="1.5" fill="#7a7a7a"/><circle cx="6.5" cy="2" r="1.5" fill="#7a7a7a"/><circle cx="11.6" cy="2" r="1.5" fill="#7a7a7a"/></svg>
<div class="a" style="left:560px;top:667px;width:1311px;height:1px;background:#dadada"></div>
<div class="a" style="left:566px;top:635.02px;font-size:12px;line-height:14px;color:#000">Ankara<br>Adliye</div>
<div class="a" style="left:638px;top:642.02px;font-size:12px;line-height:14px;color:#000">2014</div>
<div class="a" style="left:720px;top:642.02px;font-size:12px;line-height:14px;color:#000">29.08.2005</div>
<div class="a" style="left:819px;top:642.02px;font-size:12px;line-height:14px;color:#000">Kapali</div>
<div class="a" style="left:960px;top:642.02px;font-size:12px;line-height:14px;color:#000">26.12.2016</div>
<div class="a" style="right:742px;top:642.02px;font-size:12px;line-height:14px;color:#000">1.327,87</div>
<div class="a" style="right:624px;top:642.02px;font-size:12px;line-height:14px;color:#000">15.560,68</div>
<div class="a" style="right:527px;top:642.02px;font-size:12px;line-height:14px;color:#000">20,50</div>
<div class="a" style="right:415px;top:642.02px;font-size:12px;line-height:14px;color:#000">675,00</div>
<div class="a" style="right:297px;top:642.02px;font-size:12px;line-height:14px;color:#000">18.422,50</div>
<div class="a" style="right:180px;top:642.02px;font-size:12px;line-height:14px;color:#000">18.422,50</div>
<div class="a" style="right:78px;top:642.02px;font-size:12px;line-height:14px;color:#000">0,00</div>
<svg class="a" style="left:1853px;top:648.02px" width="14" height="4"><circle cx="1.5" cy="2" r="1.5" fill="#7a7a7a"/><circle cx="6.5" cy="2" r="1.5" fill="#7a7a7a"/><circle cx="11.6" cy="2" r="1.5" fill="#7a7a7a"/></svg>
<div class="a" style="left:560px;top:705px;width:1311px;height:1px;background:#dadada"></div>
<div class="a" style="left:566px;top:672.98px;font-size:12px;line-height:14px;color:#000">Ankara<br>Adliye</div>
<div class="a" style="left:638px;top:679.98px;font-size:12px;line-height:14px;color:#000">2014</div>
<div class="a" style="left:720px;top:679.98px;font-size:12px;line-height:14px;color:#000">29.08.2005</div>
<div class="a" style="left:819px;top:679.98px;font-size:12px;line-height:14px;color:#000">Kapali</div>
<div class="a" style="left:960px;top:679.98px;font-size:12px;line-height:14px;color:#000">21.12.2017</div>
<div class="a" style="right:742px;top:679.98px;font-size:12px;line-height:14px;color:#000">1.823,30</div>
<div class="a" style="right:624px;top:679.98px;font-size:12px;line-height:14px;color:#000">24.753,88</div>
<div class="a" style="right:527px;top:679.98px;font-size:12px;line-height:14px;color:#000">16,70</div>
<div class="a" style="right:415px;top:679.98px;font-size:12px;line-height:14px;color:#000">675,00</div>
<div class="a" style="right:297px;top:679.98px;font-size:12px;line-height:14px;color:#000">28.589,53</div>
<div class="a" style="right:180px;top:679.98px;font-size:12px;line-height:14px;color:#000">28.589,53</div>
<div class="a" style="right:78px;top:679.98px;font-size:12px;line-height:14px;color:#000">0,00</div>
<svg class="a" style="left:1853px;top:685.98px" width="14" height="4"><circle cx="1.5" cy="2" r="1.5" fill="#7a7a7a"/><circle cx="6.5" cy="2" r="1.5" fill="#7a7a7a"/><circle cx="11.6" cy="2" r="1.5" fill="#7a7a7a"/></svg>
<div class="a" style="left:560px;top:743px;width:1311px;height:1px;background:#dadada"></div>
<div class="a" style="left:566px;top:710.93px;font-size:12px;line-height:14px;color:#000">Ankara<br>Adliye</div>
<div class="a" style="left:638px;top:717.93px;font-size:12px;line-height:14px;color:#000">2014</div>
<div class="a" style="left:720px;top:717.93px;font-size:12px;line-height:14px;color:#000">29.08.2005</div>
<div class="a" style="left:819px;top:717.93px;font-size:12px;line-height:14px;color:#000">Yargitayda</div>
<div class="a" style="left:960px;top:717.93px;font-size:12px;line-height:14px;color:#000">21.04.2015</div>
<div class="a" style="right:742px;top:717.93px;font-size:12px;line-height:14px;color:#000">1.133,26</div>
<div class="a" style="right:624px;top:717.93px;font-size:12px;line-height:14px;color:#000">15.234,18</div>
<div class="a" style="right:527px;top:717.93px;font-size:12px;line-height:14px;color:#000">20,80</div>
<div class="a" style="right:415px;top:717.93px;font-size:12px;line-height:14px;color:#000">675,00</div>
<div class="a" style="right:297px;top:717.93px;font-size:12px;line-height:14px;color:#000">17.876,51</div>
<div class="a" style="right:180px;top:717.93px;font-size:12px;line-height:14px;color:#000">17.876,51</div>
<div class="a" style="right:78px;top:717.93px;font-size:12px;line-height:14px;color:#000">0,00</div>
<svg class="a" style="left:1853px;top:723.93px" width="14" height="4"><circle cx="1.5" cy="2" r="1.5" fill="#7a7a7a"/><circle cx="6.5" cy="2" r="1.5" fill="#7a7a7a"/><circle cx="11.6" cy="2" r="1.5" fill="#7a7a7a"/></svg>
<div class="a" style="left:560px;top:781px;width:1311px;height:1px;background:#dadada"></div>
<div class="a" style="left:566px;top:748.88px;font-size:12px;line-height:14px;color:#000">Istanbul<br>Adliye</div>
<div class="a" style="left:638px;top:755.88px;font-size:12px;line-height:14px;color:#000">2017</div>
<div class="a" style="left:720px;top:755.88px;font-size:12px;line-height:14px;color:#000">29.08.2005</div>
<div class="a" style="left:819px;top:755.88px;font-size:12px;line-height:14px;color:#000">Yargitayda</div>
<div class="a" style="left:960px;top:755.88px;font-size:12px;line-height:14px;color:#000">17.05.2018</div>
<div class="a" style="right:742px;top:755.88px;font-size:12px;line-height:14px;color:#000">6.021,53</div>
<div class="a" style="right:624px;top:755.88px;font-size:12px;line-height:14px;color:#000">129.758,97</div>
<div class="a" style="right:527px;top:755.88px;font-size:12px;line-height:14px;color:#000">13,20</div>
<div class="a" style="right:415px;top:755.88px;font-size:12px;line-height:14px;color:#000">677,42</div>
<div class="a" style="right:297px;top:755.88px;font-size:12px;line-height:14px;color:#000">143.507,03</div>
<div class="a" style="right:180px;top:755.88px;font-size:12px;line-height:14px;color:#000">143.507,03</div>
<div class="a" style="right:78px;top:755.88px;font-size:12px;line-height:14px;color:#000">0,00</div>
<svg class="a" style="left:1853px;top:761.88px" width="14" height="4"><circle cx="1.5" cy="2" r="1.5" fill="#7a7a7a"/><circle cx="6.5" cy="2" r="1.5" fill="#7a7a7a"/><circle cx="11.6" cy="2" r="1.5" fill="#7a7a7a"/></svg>
<div class="a" style="left:560px;top:819px;width:1311px;height:1px;background:#dadada"></div>
<div class="a" style="left:566px;top:786.83px;font-size:12px;line-height:14px;color:#000">Istanbul<br>Adliye</div>
<div class="a" style="left:638px;top:793.83px;font-size:12px;line-height:14px;color:#000">2014</div>
<div class="a" style="left:720px;top:793.83px;font-size:12px;line-height:14px;color:#000">29.08.2005</div>
<div class="a" style="left:819px;top:793.83px;font-size:12px;line-height:14px;color:#000">Kapali</div>
<div class="a" style="left:960px;top:793.83px;font-size:12px;line-height:14px;color:#000">24.12.2015</div>
<div class="a" style="right:742px;top:793.83px;font-size:12px;line-height:14px;color:#000">1.976,21</div>
<div class="a" style="right:624px;top:793.83px;font-size:12px;line-height:14px;color:#000">43.242,73</div>
<div class="a" style="right:527px;top:793.83px;font-size:12px;line-height:14px;color:#000">84,40</div>
<div class="a" style="right:415px;top:793.83px;font-size:12px;line-height:14px;color:#000">675,00</div>
<div class="a" style="right:297px;top:793.83px;font-size:12px;line-height:14px;color:#000">48.230,40</div>
<div class="a" style="right:180px;top:793.83px;font-size:12px;line-height:14px;color:#000">48.230,40</div>
<div class="a" style="right:78px;top:793.83px;font-size:12px;line-height:14px;color:#000">0,00</div>
<svg class="a" style="left:1853px;top:799.83px" width="14" height="4"><circle cx="1.5" cy="2" r="1.5" fill="#7a7a7a"/><circle cx="6.5" cy="2" r="1.5" fill="#7a7a7a"/><circle cx="11.6" cy="2" r="1.5" fill="#7a7a7a"/></svg>
<div class="a" style="left:560px;top:857px;width:1311px;height:1px;background:#dadada"></div>
<div class="a" style="left:566px;top:824.77px;font-size:12px;line-height:14px;color:#000">Istanbul<br>Adliye</div>
<div class="a" style="left:638px;top:831.77px;font-size:12px;line-height:14px;color:#000">2014</div>
<div class="a" style="left:720px;top:831.77px;font-size:12px;line-height:14px;color:#000">29.08.2005</div>
<div class="a" style="left:819px;top:831.77px;font-size:12px;line-height:14px;color:#000">Kapali</div>
<div class="a" style="left:960px;top:831.77px;font-size:12px;line-height:14px;color:#000">24.12.2015</div>
<div class="a" style="right:742px;top:831.77px;font-size:12px;line-height:14px;color:#000">3.979,65</div>
<div class="a" style="right:624px;top:831.77px;font-size:12px;line-height:14px;color:#000">88.446,48</div>
<div class="a" style="right:527px;top:831.77px;font-size:12px;line-height:14px;color:#000">15,20</div>
<div class="a" style="right:415px;top:831.77px;font-size:12px;line-height:14px;color:#000">675,00</div>
<div class="a" style="right:297px;top:831.77px;font-size:12px;line-height:14px;color:#000">97.719,72</div>
<div class="a" style="right:180px;top:831.77px;font-size:12px;line-height:14px;color:#000">97.719,72</div>
<div class="a" style="right:78px;top:831.77px;font-size:12px;line-height:14px;color:#000">0,00</div>
<svg class="a" style="left:1853px;top:837.77px" width="14" height="4"><circle cx="1.5" cy="2" r="1.5" fill="#7a7a7a"/><circle cx="6.5" cy="2" r="1.5" fill="#7a7a7a"/><circle cx="11.6" cy="2" r="1.5" fill="#7a7a7a"/></svg>
<div class="a" style="left:560px;top:895px;width:1311px;height:1px;background:#dadada"></div>
<div class="a" style="left:566px;top:862.73px;font-size:12px;line-height:14px;color:#000">Istanbul<br>Adliye</div>
<div class="a" style="left:638px;top:869.73px;font-size:12px;line-height:14px;color:#000">2014</div>
<div class="a" style="left:720px;top:869.73px;font-size:12px;line-height:14px;color:#000">29.08.2005</div>
<div class="a" style="left:819px;top:869.73px;font-size:12px;line-height:14px;color:#000">Kapali</div>
<div class="a" style="left:960px;top:869.73px;font-size:12px;line-height:14px;color:#000">13.10.2015</div>
<div class="a" style="right:742px;top:869.73px;font-size:12px;line-height:14px;color:#000">0,00</div>
<div class="a" style="right:624px;top:869.73px;font-size:12px;line-height:14px;color:#000">0,00</div>
<div class="a" style="right:527px;top:869.73px;font-size:12px;line-height:14px;color:#000">13,20</div>
<div class="a" style="right:415px;top:869.73px;font-size:12px;line-height:14px;color:#000">0,00</div>
<div class="a" style="right:297px;top:869.73px;font-size:12px;line-height:14px;color:#000">13,20</div>
<div class="a" style="right:180px;top:869.73px;font-size:12px;line-height:14px;color:#000">13,20</div>
<div class="a" style="right:78px;top:869.73px;font-size:12px;line-height:14px;color:#000">0,00</div>
<svg class="a" style="left:1853px;top:875.73px" width="14" height="4"><circle cx="1.5" cy="2" r="1.5" fill="#7a7a7a"/><circle cx="6.5" cy="2" r="1.5" fill="#7a7a7a"/><circle cx="11.6" cy="2" r="1.5" fill="#7a7a7a"/></svg>
<div class="a" style="left:560px;top:933px;width:1311px;height:1px;background:#dadada"></div>
<div class="a" style="left:566px;top:900.68px;font-size:12px;line-height:14px;color:#000">Istanbul<br>Adliye</div>
<div class="a" style="left:638px;top:907.68px;font-size:12px;line-height:14px;color:#000">2014</div>
<div class="a" style="left:720px;top:907.68px;font-size:12px;line-height:14px;color:#000">29.08.2005</div>
<div class="a" style="left:819px;top:907.68px;font-size:12px;line-height:14px;color:#000">Kapali</div>
<div class="a" style="left:960px;top:907.68px;font-size:12px;line-height:14px;color:#000">08.08.2016</div>
<div class="a" style="right:742px;top:907.68px;font-size:12px;line-height:14px;color:#000">0,00</div>
<div class="a" style="right:624px;top:907.68px;font-size:12px;line-height:14px;color:#000">0,00</div>
<div class="a" style="right:527px;top:907.68px;font-size:12px;line-height:14px;color:#000">13,20</div>
<div class="a" style="right:415px;top:907.68px;font-size:12px;line-height:14px;color:#000">0,00</div>
<div class="a" style="right:297px;top:907.68px;font-size:12px;line-height:14px;color:#000">13,20</div>
<div class="a" style="right:180px;top:907.68px;font-size:12px;line-height:14px;color:#000">13,20</div>
<div class="a" style="right:78px;top:907.68px;font-size:12px;line-height:14px;color:#000">0,00</div>
<svg class="a" style="left:1853px;top:913.68px" width="14" height="4"><circle cx="1.5" cy="2" r="1.5" fill="#7a7a7a"/><circle cx="6.5" cy="2" r="1.5" fill="#7a7a7a"/><circle cx="11.6" cy="2" r="1.5" fill="#7a7a7a"/></svg>
<div class="a" style="left:560px;top:971px;width:1311px;height:1px;background:#dadada"></div>
<div class="a" style="left:566px;top:938.62px;font-size:12px;line-height:14px;color:#000">Istanbul<br>Adliye</div>
<div class="a" style="left:638px;top:945.62px;font-size:12px;line-height:14px;color:#000">2014</div>
<div class="a" style="left:720px;top:945.62px;font-size:12px;line-height:14px;color:#000">29.08.2005</div>
<div class="a" style="left:819px;top:945.62px;font-size:12px;line-height:14px;color:#000">Kapali</div>
<div class="a" style="left:960px;top:945.62px;font-size:12px;line-height:14px;color:#000">13.10.2015</div>
<div class="a" style="right:742px;top:945.62px;font-size:12px;line-height:14px;color:#000">0,00</div>
<div class="a" style="right:624px;top:945.62px;font-size:12px;line-height:14px;color:#000">0,00</div>
<div class="a" style="right:527px;top:945.62px;font-size:12px;line-height:14px;color:#000">13,20</div>
<div class="a" style="right:415px;top:945.62px;font-size:12px;line-height:14px;color:#000">0,00</div>
<div class="a" style="right:297px;top:945.62px;font-size:12px;line-height:14px;color:#000">13,20</div>
<div class="a" style="right:180px;top:945.62px;font-size:12px;line-height:14px;color:#000">13,20</div>
<div class="a" style="right:78px;top:945.62px;font-size:12px;line-height:14px;color:#000">0,00</div>
<svg class="a" style="left:1853px;top:951.62px" width="14" height="4"><circle cx="1.5" cy="2" r="1.5" fill="#7a7a7a"/><circle cx="6.5" cy="2" r="1.5" fill="#7a7a7a"/><circle cx="11.6" cy="2" r="1.5" fill="#7a7a7a"/></svg>
<div class="a" style="left:560px;top:1009px;width:1311px;height:1px;background:#dadada"></div>
<div class="a" style="left:566px;top:976.58px;font-size:12px;line-height:14px;color:#000">Istanbul<br>Adliye</div>
<div class="a" style="left:638px;top:983.58px;font-size:12px;line-height:14px;color:#000">2014</div>
<div class="a" style="left:720px;top:983.58px;font-size:12px;line-height:14px;color:#000">29.08.2005</div>
<div class="a" style="left:819px;top:983.58px;font-size:12px;line-height:14px;color:#000">Kapali</div>
<div class="a" style="left:960px;top:983.58px;font-size:12px;line-height:14px;color:#000">20.12.2016</div>
<div class="a" style="right:742px;top:983.58px;font-size:12px;line-height:14px;color:#000">0,00</div>
<div class="a" style="right:624px;top:983.58px;font-size:12px;line-height:14px;color:#000">0,00</div>
<div class="a" style="right:527px;top:983.58px;font-size:12px;line-height:14px;color:#000">13,20</div>
<div class="a" style="right:415px;top:983.58px;font-size:12px;line-height:14px;color:#000">0,00</div>
<div class="a" style="right:297px;top:983.58px;font-size:12px;line-height:14px;color:#000">13,20</div>
<div class="a" style="right:180px;top:983.58px;font-size:12px;line-height:14px;color:#000">13,20</div>
<div class="a" style="right:78px;top:983.58px;font-size:12px;line-height:14px;color:#000">0,00</div>
<svg class="a" style="left:1853px;top:989.58px" width="14" height="4"><circle cx="1.5" cy="2" r="1.5" fill="#7a7a7a"/><circle cx="6.5" cy="2" r="1.5" fill="#7a7a7a"/><circle cx="11.6" cy="2" r="1.5" fill="#7a7a7a"/></svg>
<div class="a" style="left:560px;top:1046px;width:1311px;height:1px;background:#dadada"></div>
<div class="a" style="left:566px;top:1014.53px;font-size:12px;line-height:14px;color:#000">Istanbul<br>Adliye</div>
<div class="a" style="left:638px;top:1021.53px;font-size:12px;line-height:14px;color:#000">2017</div>
<div class="a" style="left:720px;top:1021.53px;font-size:12px;line-height:14px;color:#000">29.08.2005</div>
<div class="a" style="left:819px;top:1021.53px;font-size:12px;line-height:14px;color:#000">Kapali</div>
<div class="a" style="left:960px;top:1021.53px;font-size:12px;line-height:14px;color:#000">05.12.2019</div>
<div class="a" style="right:742px;top:1021.53px;font-size:12px;line-height:14px;color:#000">0,00</div>
<div class="a" style="right:624px;top:1021.53px;font-size:12px;line-height:14px;color:#000">0,00</div>
<div class="a" style="right:527px;top:1021.53px;font-size:12px;line-height:14px;color:#000">23,40</div>
<div class="a" style="right:415px;top:1021.53px;font-size:12px;line-height:14px;color:#000">0,00</div>
<div class="a" style="right:297px;top:1021.53px;font-size:12px;line-height:14px;color:#000">23,40</div>
<div class="a" style="right:180px;top:1021.53px;font-size:12px;line-height:14px;color:#000">23,40</div>
<div class="a" style="right:78px;top:1021.53px;font-size:12px;line-height:14px;color:#000">0,00</div>
<svg class="a" style="left:1853px;top:1027.53px" width="14" height="4"><circle cx="1.5" cy="2" r="1.5" fill="#7a7a7a"/><circle cx="6.5" cy="2" r="1.5" fill="#7a7a7a"/><circle cx="11.6" cy="2" r="1.5" fill="#7a7a7a"/></svg>
<div class="a" style="left:560px;top:1084px;width:1311px;height:1px;background:#dadada"></div>
<div class="a" style="left:566px;top:1052.47px;font-size:12px;line-height:14px;color:#000">Istanbul<br>Adliye</div>
<div class="a" style="left:638px;top:1059.47px;font-size:12px;line-height:14px;color:#000">2019</div>
<div class="a" style="left:720px;top:1059.47px;font-size:12px;line-height:14px;color:#000">29.08.2005</div>
<div class="a" style="left:819px;top:1059.47px;font-size:12px;line-height:14px;color:#000">Yargitayda</div>
<div class="a" style="left:960px;top:1059.47px;font-size:12px;line-height:14px;color:#000">17.06.2019</div>
<div class="a" style="right:742px;top:1059.47px;font-size:12px;line-height:14px;color:#000">0,00</div>
<div class="a" style="right:624px;top:1059.47px;font-size:12px;line-height:14px;color:#000">0,00</div>
<div class="a" style="right:527px;top:1059.47px;font-size:12px;line-height:14px;color:#000">16,70</div>
<div class="a" style="right:415px;top:1059.47px;font-size:12px;line-height:14px;color:#000">0,00</div>
<div class="a" style="right:297px;top:1059.47px;font-size:12px;line-height:14px;color:#000">16,70</div>
<div class="a" style="right:180px;top:1059.47px;font-size:12px;line-height:14px;color:#000">16,70</div>
<div class="a" style="right:78px;top:1059.47px;font-size:12px;line-height:14px;color:#000">0,00</div>
<svg class="a" style="left:1853px;top:1065.47px" width="14" height="4"><circle cx="1.5" cy="2" r="1.5" fill="#7a7a7a"/><circle cx="6.5" cy="2" r="1.5" fill="#7a7a7a"/><circle cx="11.6" cy="2" r="1.5" fill="#7a7a7a"/></svg>
<div class="a" style="left:560px;top:1122px;width:1311px;height:1px;background:#dadada"></div>
<div class="a" style="left:566px;top:1090.42px;font-size:12px;line-height:14px;color:#000">Istanbul<br>Adliye</div>
<div class="a" style="left:638px;top:1097.42px;font-size:12px;line-height:14px;color:#000">2013</div>
<div class="a" style="left:720px;top:1097.42px;font-size:12px;line-height:14px;color:#000">29.08.2005</div>
<div class="a" style="left:819px;top:1097.42px;font-size:12px;line-height:14px;color:#000">Kapali</div>
<div class="a" style="left:960px;top:1097.42px;font-size:12px;line-height:14px;color:#000">08.12.2015</div>
<div class="a" style="right:742px;top:1097.42px;font-size:12px;line-height:14px;color:#000">16.625,44</div>
<div class="a" style="right:624px;top:1097.42px;font-size:12px;line-height:14px;color:#000">118.947,95</div>
<div class="a" style="right:527px;top:1097.42px;font-size:12px;line-height:14px;color:#000">13,20</div>
<div class="a" style="right:415px;top:1097.42px;font-size:12px;line-height:14px;color:#000">1.870,36</div>
<div class="a" style="right:297px;top:1097.42px;font-size:12px;line-height:14px;color:#000">144.160,81</div>
<div class="a" style="right:180px;top:1097.42px;font-size:12px;line-height:14px;color:#000">144.160,81</div>
<div class="a" style="right:78px;top:1097.42px;font-size:12px;line-height:14px;color:#000">0,00</div>
<svg class="a" style="left:1853px;top:1103.42px" width="14" height="4"><circle cx="1.5" cy="2" r="1.5" fill="#7a7a7a"/><circle cx="6.5" cy="2" r="1.5" fill="#7a7a7a"/><circle cx="11.6" cy="2" r="1.5" fill="#7a7a7a"/></svg>
</body></html>
